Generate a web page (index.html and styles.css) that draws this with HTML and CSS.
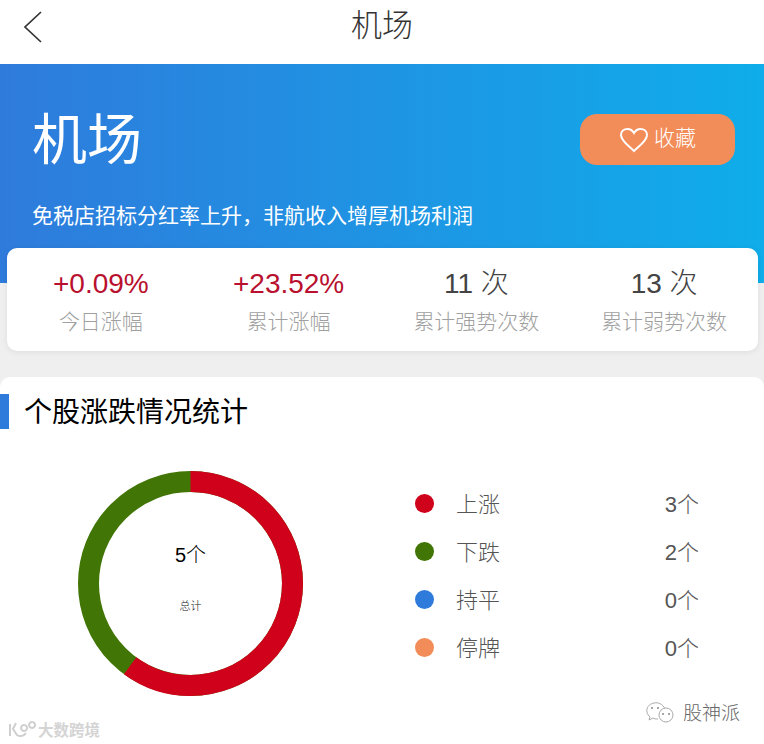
FILE: index.html
```html
<!DOCTYPE html>
<html>
<head>
  <title>机场</title>
  <link rel="stylesheet" href="styles.css">
</head>
<body>

  <div class="topbar">
    <svg class="back" width="20" height="34" viewBox="0 0 20 34">
      <path d="M18 2 L2 17 L18 32" fill="none" stroke="#333" stroke-width="1.700"/>
    </svg>
    <h1>机场</h1>
  </div>

  <div class="hero">
    <div class="hero-row">
      <h2>机场</h2>
      <div class="fav">
        <svg width="30" height="26" viewBox="0 0 30 26">
          <path d="M15 24 C10 19 2 14 2 8 C2 4 5 2 8.500 2 C11 2 13.500 3.500 15 6 C16.500 3.500 19 2 21.500 2 C25 2 28 4 28 8 C28 14 20 19 15 24 Z" fill="none" stroke="#fff" stroke-width="2"/>
        </svg>
        <span>收藏</span>
      </div>
    </div>
    <p>免税店招标分红率上升，非航收入增厚机场利润</p>
  </div>

  <div class="stats">
    <div class="stat">
      <div class="num red">+0.09%</div>
      <div class="label">今日涨幅</div>
    </div>
    <div class="stat">
      <div class="num red">+23.52%</div>
      <div class="label">累计涨幅</div>
    </div>
    <div class="stat">
      <div class="num">11 次</div>
      <div class="label">累计强势次数</div>
    </div>
    <div class="stat">
      <div class="num">13 次</div>
      <div class="label">累计弱势次数</div>
    </div>
  </div>

  <div class="section">
    <div class="section-title">个股涨跌情况统计</div>
    <div class="chart-row">
      <div class="donut">
        <svg width="225" height="225" viewBox="0 0 225 225">
          <circle class="ring" cx="112.500" cy="112.500" r="102" stroke="#417505"/>
          <circle class="ring" cx="112.500" cy="112.500" r="102" stroke="#d0021b" stroke-dasharray="384.500 641" transform="rotate(-90 112.500 112.500)"/>
        </svg>
        <div class="donut-text">
          <div class="total">5个</div>
          <div class="total-label">总计</div>
        </div>
      </div>
      <div class="legend">
        <div class="legend-row"><i class="dot" style="background:#d0021b"></i><span class="name">上涨</span><span class="count">3个</span></div>
        <div class="legend-row"><i class="dot" style="background:#417505"></i><span class="name">下跌</span><span class="count">2个</span></div>
        <div class="legend-row"><i class="dot" style="background:#2f7bdc"></i><span class="name">持平</span><span class="count">0个</span></div>
        <div class="legend-row"><i class="dot" style="background:#f28c59"></i><span class="name">停牌</span><span class="count">0个</span></div>
      </div>
    </div>
  </div>

  <div class="mark-left">
    <svg width="30" height="22" viewBox="0 0 30 22">
      <path d="M3 6 V18 M9 5 L6 11 L10 17 C13 19 17 18 19 15 M17 7 A3 3 0 1 0 17.100 7 M25 4 A3 3 0 1 0 25.100 4" fill="none" stroke="#cfcfcf" stroke-width="2"/>
    </svg>
    <span>大数跨境</span>
  </div>

  <div class="mark-right">
    <svg width="32" height="22" viewBox="0 0 32 22">
      <path d="M20 8 C18 3 13 1 9 2 C4 3 1 7 2 11 C2 13 4 15 5 16 L4 19 L8 17 C9 18 11 18 13 18" fill="none" stroke="#aaa" stroke-width="1"/>
      <circle cx="21" cy="14" r="7" fill="#fff" stroke="#aaa" stroke-width="1"/>
      <circle cx="7" cy="7" r="1" fill="#888"/>
      <circle cx="13" cy="7" r="1" fill="#888"/>
      <circle cx="18" cy="13" r="1" fill="#888"/>
      <circle cx="24" cy="13" r="1" fill="#888"/>
    </svg>
    <span>股神派</span>
  </div>

</body>
</html>
```

FILE: styles.css
```css
body {
  margin: 0;
  font-family: "Liberation Sans", "Noto Sans CJK SC", sans-serif;
  font-weight: 300;
  background: #efefef;
  height: 744px;
  overflow: hidden;
  position: relative;
}

.topbar {
  height: 64px;
  background: white;
  display: flex;
  align-items: center;
  justify-content: center;
  position: relative;
}

.topbar h1 {
  margin: 0 0 20px;
  font-size: 31px;
  font-weight: 300;
  color: #333;
}

.back {
  position: absolute;
  left: 23px;
  top: 10px;
}

.hero {
  height: 219px;
  box-sizing: border-box;
  padding: 40px 29px 0 32px;
  background: linear-gradient(90deg, #2f7bdc, #0fadea);
  color: white;
}

.hero-row {
  display: flex;
  justify-content: space-between;
  align-items: flex-start;
}

.hero h2 {
  margin: 0;
  font-size: 55px;
  font-weight: 400;
  line-height: 72px;
}

.fav {
  width: 155px;
  height: 51px;
  margin-top: 10px;
  border-radius: 17px;
  background: #f28c59;
  display: flex;
  align-items: center;
  justify-content: center;
  gap: 5px;
  font-size: 21px;
  line-height: 45px;
}

.fav span {
  margin-bottom: 5px;
}

.hero p {
  margin: 25px 0 0;
  font-size: 21px;
  line-height: 30px;
  font-weight: 400;
}

.stats {
  margin: -35px 6px 0 7px;
  height: 103px;
  background: white;
  border-radius: 10px;
  box-shadow: 0 1px 6px rgba(0, 0, 0, 0.08);
  display: grid;
  grid-template-columns: repeat(4, 1fr);
  position: relative;
}

.stat {
  text-align: center;
  padding-top: 18px;
}

.num {
  font-size: 28px;
  line-height: 36px;
  color: #444;
}

.num.red {
  color: #b8102e;
}

.label {
  margin-top: 5px;
  font-size: 21px;
  line-height: 30px;
  color: #a0a0a0;
}

.section {
  margin-top: 26px;
  height: 350px;
  background: white;
  border-radius: 10px 10px 0 0;
  padding-top: 17px;
}

.section-title {
  height: 35px;
  border-left: 9px solid #2f7bdc;
  padding-left: 15px;
  font-size: 28px;
  line-height: 37px;
  font-weight: 400;
  color: black;
}

.chart-row {
  display: flex;
  margin-top: 42px;
  padding-left: 78px;
}

.donut {
  width: 225px;
  height: 225px;
  position: relative;
}

.ring {
  fill: none;
  stroke-width: 21;
}

.donut-text {
  position: absolute;
  inset: 0;
  text-align: center;
  color: black;
}

.total {
  margin-top: 70px;
  font-size: 20px;
  line-height: 28px;
}

.total-label {
  margin-top: 29px;
  font-size: 11px;
  line-height: 16px;
  color: #222;
}

.legend {
  margin-left: 112px;
  padding-top: 8px;
  width: 284px;
}

.legend-row {
  display: flex;
  align-items: center;
  height: 48px;
  font-size: 22px;
  color: #555;
}

.dot {
  width: 19px;
  height: 19px;
  border-radius: 50%;
}

.name {
  margin-left: 22px;
  margin-bottom: 2px;
  width: 209px;
}

.count {
  white-space: nowrap;
  margin-bottom: 2px;
}

.mark-left {
  position: absolute;
  left: 7px;
  top: 718px;
  display: flex;
  align-items: center;
  gap: 1px;
  font-size: 15.500px;
  font-weight: 700;
  color: #d4d4d4;
}

.mark-right {
  position: absolute;
  left: 645px;
  top: 698px;
  display: flex;
  align-items: center;
  gap: 6px;
  font-size: 19px;
  color: #666;
}
```
